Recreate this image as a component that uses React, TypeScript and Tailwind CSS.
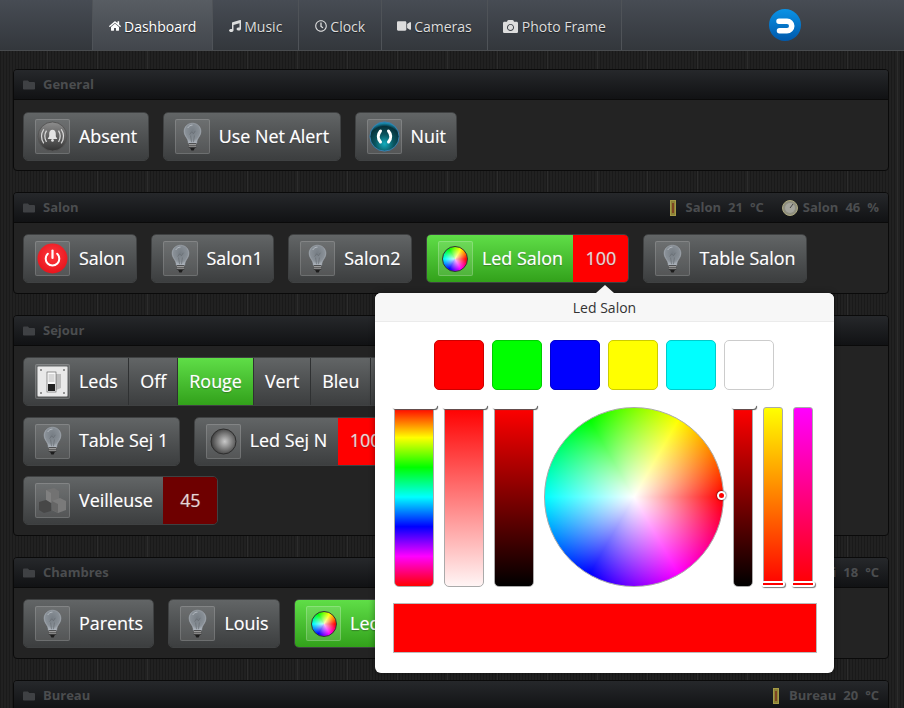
import React from "react";
import { FaHome, FaMusic, FaRegClock, FaVideo, FaCamera, FaFolder } from "react-icons/fa";

const Bulb = () => (
  <svg width="19" height="30" viewBox="0 0 20 31">
    <defs>
      <radialGradient id="glass" cx="0.5" cy="0.4" r="0.6">
        <stop offset="0" stopColor="#767d84" />
        <stop offset="0.7" stopColor="#899097" />
        <stop offset="1" stopColor="#b0b7bf" />
      </radialGradient>
    </defs>
    <path d="M10 1C4.8 1 1.2 4.8 1.2 9.6c0 3.8 2.4 6 3.6 8.6.6 1.3.7 2.6.8 3.8h8.8c.1-1.2.2-2.5.8-3.8 1.2-2.6 3.6-4.8 3.6-8.6C18.8 4.8 15.2 1 10 1z" fill="url(#glass)" stroke="#a9b0b8" strokeWidth="0.6" />
    <path d="M5 6c1-2 3-3 5-3" stroke="#c9ced4" strokeWidth="1" fill="none" opacity="0.7" />
    <path d="M7 13l2-3 2 2 2-3M8 14l1 7M12 14l-1 7" stroke="#5f656b" strokeWidth="0.6" fill="none" />
    <rect x="5.8" y="22" width="8.4" height="5" rx="1" fill="#3c3c3c" />
    <path d="M6 23.5h8M6 25.2h8" stroke="#c8c8c8" strokeWidth="0.8" />
    <path d="M7.5 27h5l-1.3 2.6h-2.4z" fill="#1d1d1d" />
  </svg>
);

const Bell = () => (
  <svg width="31" height="31" viewBox="0 0 32 32">
    <defs>
      <linearGradient id="bellbg" x1="0" y1="0" x2="0" y2="1">
        <stop offset="0" stopColor="#8e8e8e" />
        <stop offset="1" stopColor="#333333" />
      </linearGradient>
    </defs>
    <circle cx="16" cy="16" r="15" fill="url(#bellbg)" stroke="#555" />
    <path d="M16 9c-2.4 0-3.4 2-3.4 4.2v2.6L11 18.6h10l-1.600-2.800v-2.600C19.400 11 18.400 9 16 9z" fill="#e4e4e4" />
    <circle cx="16" cy="20" r="1.400" fill="#e4e4e4" />
    <path d="M9.800 10c-2.200 3.600-2.200 8 0 11.600M7 8.500c-3 4.600-3 10 0 14.600M22.200 10c2.200 3.600 2.200 8 0 11.600M25 8.500c3 4.600 3 10 0 14.600" stroke="#d8d8d8" strokeWidth="1.300" fill="none" />
  </svg>
);

const Power = () => (
  <svg width="31" height="31" viewBox="0 0 31 31">
    <defs>
      <radialGradient id="redb" cx="0.5" cy="0.4" r="0.6">
        <stop offset="0" stopColor="#ff3a3f" />
        <stop offset="1" stopColor="#e8141c" />
      </radialGradient>
    </defs>
    <circle cx="15.5" cy="15.5" r="15" fill="url(#redb)" />
    <path d="M10.8 10.8a6.8 6.8 0 1 0 9.4 0" stroke="#fff" strokeWidth="2" fill="none" strokeLinecap="round" />
    <path d="M15.5 7.5v7.5" stroke="#fff" strokeWidth="2.2" strokeLinecap="round" />
  </svg>
);

const Night = () => (
  <svg width="31" height="31" viewBox="0 0 31 31">
    <defs>
      <radialGradient id="teal" cx="0.5" cy="0.75" r="0.7">
        <stop offset="0" stopColor="#14aebf" />
        <stop offset="0.45" stopColor="#0a5560" />
        <stop offset="0.85" stopColor="#07313a" />
        <stop offset="1" stopColor="#1787a8" />
      </radialGradient>
    </defs>
    <circle cx="15.5" cy="15.5" r="14.6" fill="url(#teal)" stroke="#3a7fb0" />
    <path d="M11.500 10c-2.800 3.400-2.800 7.600 0 11M19.500 10c2.800 3.400 2.800 7.600 0 11" stroke="#fff" strokeWidth="3" fill="none" strokeLinecap="round" />
  </svg>
);

const Orb = () => (
  <svg width="27" height="27" viewBox="0 0 27 27">
    <defs>
      <radialGradient id="orb" cx="0.55" cy="0.5" r="0.55">
        <stop offset="0" stopColor="#c9c9c9" />
        <stop offset="0.65" stopColor="#6f6f6f" />
        <stop offset="1" stopColor="#3e3e3e" />
      </radialGradient>
    </defs>
    <circle cx="13.5" cy="13.5" r="12.5" fill="url(#orb)" stroke="#2e2e2e" />
  </svg>
);

const Cubes = () => (
  <svg width="31" height="27" viewBox="0 0 31 27">
    <path d="M9 3l8-2 5 3v9l-8 3-5-3z" fill="#727272" />
    <path d="M9 3l5 3v10l-5-3z" fill="#808080" />
    <path d="M2 15l7-2 5 3v8l-7 2-5-3z" fill="#474747" />
    <path d="M15 14l8-3 6 3v9l-8 3-6-3z" fill="#7a7a7a" />
    <path d="M15 14l6 3v9l-6-3z" fill="#666666" />
  </svg>
);

const Toggle = () => (
  <svg width="31" height="31" viewBox="0 0 31 31">
    <rect x="0.5" y="0.5" width="30" height="30" rx="1" fill="#e9e9e9" />
    <path d="M17 8h7v14l-7 3z" fill="#bdbdbd" />
    <rect x="10" y="6" width="9" height="20" fill="#fafafa" stroke="#555" strokeWidth="0.6" />
    <rect x="11.5" y="8" width="6" height="8" fill="#d8d8d8" />
    <rect x="11" y="18" width="7" height="7" fill="#222" />
    <circle cx="4" cy="4" r="1" fill="#777" />
    <circle cx="27" cy="4" r="1" fill="#777" />
    <circle cx="4" cy="27" r="1" fill="#777" />
    <circle cx="27" cy="27" r="1" fill="#777" />
  </svg>
);

const Thermo = () => (
  <svg width="6" height="16" viewBox="0 0 6 16" className="mr-[10px]">
    <rect x="0.5" y="0.5" width="5" height="15" fill="#8d8236" stroke="#a59a46" />
    <rect x="2.3" y="3" width="1.4" height="10" fill="#7a2a1c" />
  </svg>
);

const Gauge = () => (
  <svg width="16" height="16" viewBox="0 0 16 16" className="mr-[5px]">
    <circle cx="8" cy="8" r="7.5" fill="#8f8f80" stroke="#b0ab80" />
    <circle cx="8" cy="8" r="5" fill="#a5a59d" />
    <path d="M8 8l3-4" stroke="#444" strokeWidth="1" />
  </svg>
);

const MiniWheel = () => (
  <div className="relative h-[26px] w-[26px] overflow-hidden rounded-full border border-[#333] bg-[conic-gradient(from_90deg,#f00,#f0f,#00f,#0ff,#0f0,#ff0,#f00)]">
    <div className="absolute inset-0 bg-[radial-gradient(circle,#ffffffcc_0%,#ffffff00_65%)]" />
  </div>
);

const icons: Record<string, React.ReactNode> = {
  bulb: <Bulb />,
  bell: <Bell />,
  power: <Power />,
  night: <Night />,
  orb: <Orb />,
  cubes: <Cubes />,
  toggle: <Toggle />,
  wheel: <MiniWheel />,
};

const gray = "bg-gradient-to-b from-[#626566] to-[#3c3e3f]";
const green = "bg-gradient-to-b from-[#5fde47] to-[#32a11a]";
const bold = "[text-shadow:0_0_1px_#ffffff80,0_1px_1px_#0005]";

function IconBox({ icon, on }: { icon: string; on?: boolean }) {
  return (
    <span className={"flex h-[35px] w-[35px] shrink-0 items-center justify-center overflow-hidden rounded-[2px] border " + (on ? "border-[#ffffff33] bg-[#ffffff1f]" : "border-[#ffffff26] bg-[#ffffff1a]")}>
      {icons[icon]}
    </span>
  );
}

function Btn({ icon, label, on, value, valueClass }: { icon: string; label: string; on?: boolean; value?: string; valueClass?: string }) {
  return (
    <div className={"flex h-[49px] overflow-hidden rounded-[5px] border border-[#3f4142] text-[17.9px] leading-none text-white " + bold}>
      <div className={"flex items-center gap-[9px] pl-[11px] pr-[10.5px] " + (on ? green : gray)}>
        <IconBox icon={icon} on={on} />
        <span>{label}</span>
      </div>
      {value !== undefined && (
        <div className={"flex items-center justify-center text-[#e5d5d5] " + valueClass}>{value}</div>
      )}
    </div>
  );
}

function Panel({ title, right, children, bodyClass }: { title: string; right?: React.ReactNode; children?: React.ReactNode; bodyClass?: string }) {
  return (
    <section className="overflow-hidden rounded-[4px] border border-[#0a0a0a] bg-[#232323]">
      <header className="flex h-[30px] items-center justify-between border-b border-[#0a0a0a] bg-gradient-to-b from-[#26282b] to-[#111214] pl-[9px] pr-[9px] text-[13px] font-bold text-[#4b4d4f]">
        <div className="flex items-center gap-2">
          <FaFolder className="text-[12px] text-[#3f4144]" />
          <span>{title}</span>
        </div>
        {right && <div className="flex items-center">{right}</div>}
      </header>
      <div className={"flex flex-col gap-y-[10.5px] pl-[9px] pr-[9px] " + (bodyClass ?? "pb-[10px] pt-[11px]")}>{children}</div>
    </section>
  );
}

function Row({ children }: { children: React.ReactNode }) {
  return <div className="flex gap-x-[14px]">{children}</div>;
}

function Bar({ fill, handle }: { fill: string; handle: "top" | "bottom" }) {
  return (
    <div className="relative h-[180px] w-full">
      <div className={"h-full w-full rounded-b-[5px] rounded-t-[3px] border border-[#aaaaaa] " + fill} />
      {handle === "top" && (
        <div className="absolute -left-[2px] -right-[3px] -top-[2px] h-[4px] rounded-b-[3px] bg-white shadow-[1px_1px_1px_#555]" />
      )}
      {handle === "bottom" && (
        <div className="absolute -left-[2px] -right-[2px] bottom-0 flex h-[6px] items-center rounded-[4px] bg-white px-[2px] shadow-[1px_1px_1px_#777]">
          <div className="h-[2px] w-full bg-[#ff0000]" />
        </div>
      )}
    </div>
  );
}

const swatches = [
  "bg-[#ff0000] border-[#cc0000]",
  "bg-[#00ff00] border-[#00cc00]",
  "bg-[#0000ff] border-[#0000cc]",
  "bg-[#ffff00] border-[#cccc00]",
  "bg-[#00ffff] border-[#00cccc]",
  "bg-[#ffffff] border-[#cccccc]",
];

function Picker() {
  return (
    <div className="absolute left-[375px] top-[293px] z-10 w-[459px] rounded-[6px] bg-white text-[#333] shadow-[0_0_6px_#0006]">
      <div className="absolute -top-[8px] left-[221px] h-0 w-0 border-x-[9px] border-b-[8px] border-x-transparent border-b-[#f7f7f7]" />
      <div className="flex h-[29px] items-center justify-center rounded-t-[6px] border-b border-[#ebebeb] bg-[#f7f7f7] text-[14px]">Led Salon</div>
      <div className="mt-[18px] flex justify-center gap-2 pr-[1px]">
        {swatches.map((s) => (
          <div key={s} className={"h-[50px] w-[50px] rounded-[5px] border " + s} />
        ))}
      </div>
      <div className="ml-[19px] mt-[17px] flex">
        <div className="w-[40px]"><Bar handle="top" fill="bg-[linear-gradient(#f00,#ff0,#0f0,#0ff,#00f,#f0f,#f00)]" /></div>
        <div className="ml-[10px] w-[40px]"><Bar handle="top" fill="bg-[linear-gradient(#f00,#fff5f5)]" /></div>
        <div className="ml-[10px] w-[40px]"><Bar handle="top" fill="bg-[linear-gradient(#f00,#000)]" /></div>
        <div className="relative ml-[10px] h-[180px] w-[180px] rounded-full border border-[#aaaaaa] bg-[conic-gradient(from_90deg,#f00,#f0f,#00f,#0ff,#0f0,#ff0,#f00)]">
          <div className="h-full w-full rounded-full bg-[radial-gradient(circle,#ffffff_0%,#ffffff00_70%)]" />
          <div className="absolute right-[-3px] top-[83px] h-[9px] w-[9px] rounded-full border-[2.5px] border-white bg-[#f00] shadow-[0_0_2px_#000]" />
        </div>
        <div className="ml-[9px] w-[20px]"><Bar handle="top" fill="bg-[linear-gradient(#f00,#000)]" /></div>
        <div className="ml-[10px] w-[20px]"><Bar handle="bottom" fill="bg-[linear-gradient(#ff0,#f00)]" /></div>
        <div className="ml-[10px] w-[20px]"><Bar handle="bottom" fill="bg-[linear-gradient(#f0f,#f00)]" /></div>
      </div>
      <div className="mb-[20px] ml-[18px] mr-[17px] mt-[16px] h-[50px] border border-[#bbbbbb] bg-[#ff0000]" />
    </div>
  );
}

const navs = [
  { icon: <FaHome className="text-[12px]" />, label: "Dashboard", active: true, cls: "px-[15.5px] gap-[3.5px]" },
  { icon: <FaMusic className="text-[12px]" />, label: "Music", cls: "px-4 gap-[3.5px]" },
  { icon: <FaRegClock className="text-[12px]" />, label: "Clock", cls: "px-[15.5px] gap-[3.5px]" },
  { icon: <FaVideo className="text-[14px]" />, label: "Cameras", cls: "px-[15.5px] gap-[3px]" },
  { icon: <FaCamera className="text-[15px]" />, label: "Photo Frame", cls: "px-[15px] gap-[3.5px]" },
];

const SegClass = "flex items-center border-l border-[#2f3132] px-[11px] text-[17.9px] text-white";

export default function App() {
  return (
    <div className="relative h-[708px] w-[904px] overflow-hidden bg-[#1c1c1c] bg-[image:repeating-linear-gradient(90deg,transparent_0,transparent_47px,#2c2c2c_47px,#2c2c2c_48px,transparent_48px,transparent_50px),repeating-linear-gradient(90deg,#1a1a1a_0,#1a1a1a_1px,#212121_1px,#212121_3px)] [font-family:'Open_Sans',sans-serif]">
      <nav className="flex h-[51px] border-b border-[#484b4e] bg-gradient-to-b from-[#474c54] to-[#33373c] pl-[92px] text-[14px] text-[#dddddd] [text-shadow:0_1px_1px_#0008]">
        {navs.map((n) => (
          <div key={n.label} className={"flex items-center border-l border-[#4f5358] pt-[2px] " + n.cls + " " + (n.active ? "bg-gradient-to-b from-[#585d63] to-[#42464c] text-white" : "")}>
            {n.icon}
            <span>{n.label}</span>
          </div>
        ))}
        <div className="w-px bg-[#4f5358]" />
        <svg width="32" height="32" viewBox="0 0 32 32" className="ml-[147px] mt-[9px]">
          <defs>
            <linearGradient id="logo" x1="0" y1="0" x2="0" y2="1">
              <stop offset="0" stopColor="#0a93e6" />
              <stop offset="1" stopColor="#0058ab" />
            </linearGradient>
          </defs>
          <circle cx="16" cy="16" r="16" fill="url(#logo)" />
          <path d="M10 9.5h8a7.5 7.5 0 0 1 0 15h-7.5a2.7 2.7 0 0 1 0-5.5H18a1.8 1.8 0 0 0 0-4h-8a2.75 2.75 0 0 1 0-5.5z" fill="#fff" />
        </svg>
      </nav>

      <main className="flex flex-col gap-[21px] pl-[13px] pr-[15px] pt-[18px]">
        <Panel title="General" bodyClass="pb-[9px] pt-[12px]">
          <Row>
            <Btn icon="bell" label="Absent" />
            <Btn icon="bulb" label="Use Net Alert" />
            <Btn icon="night" label="Nuit" />
          </Row>
        </Panel>

        <Panel
          title="Salon"
          right={
            <>
              <Thermo />
              <span className="mr-[7px]">Salon</span>
              <span className="mr-[7px]">21</span>
              <span className="mr-[18px]">°C</span>
              <Gauge />
              <span className="mr-[7px]">Salon</span>
              <span className="mr-[7px]">46</span>
              <span>%</span>
            </>
          }
        >
          <Row>
            <Btn icon="power" label="Salon" />
            <Btn icon="bulb" label="Salon1" />
            <Btn icon="bulb" label="Salon2" />
            <Btn icon="wheel" label="Led Salon" on value="100" valueClass="w-[55px] bg-[#ff0000]" />
            <Btn icon="bulb" label="Table Salon" />
          </Row>
        </Panel>

        <Panel title="Sejour">
          <Row>
            <div className={"flex h-[49px] overflow-hidden rounded-[5px] border border-[#3f4142] " + bold}>
              <div className={"flex items-center gap-[9px] pl-[11px] pr-[10.5px] text-[17.9px] text-white " + gray}>
                <IconBox icon="toggle" />
                <span>Leds</span>
              </div>
              <div className={SegClass + " " + gray}>Off</div>
              <div className={SegClass + " " + green}>Rouge</div>
              <div className={SegClass + " " + gray}>Vert</div>
              <div className={SegClass + " " + gray}>Bleu</div>
              <div className={SegClass + " w-[40px] " + gray} />
            </div>
          </Row>
          <Row>
            <Btn icon="bulb" label="Table Sej 1" />
            <Btn icon="orb" label="Led Sej N" value="100" valueClass="w-[55px] bg-[#ff0000]" />
          </Row>
          <Row>
            <Btn icon="cubes" label="Veilleuse" value="45" valueClass="w-[54px] bg-[#6e0000] text-[#c9b4b4]" />
          </Row>
        </Panel>

        <Panel
          title="Chambres"
          right={
            <>
              <span className="mr-[7px]">i</span>
              <span className="mr-[7px]">18</span>
              <span>°C</span>
            </>
          }
        >
          <Row>
            <Btn icon="bulb" label="Parents" />
            <Btn icon="bulb" label="Louis" />
            <Btn icon="wheel" label="Led Salon" on />
          </Row>
        </Panel>

        <Panel
          title="Bureau"
          right={
            <>
              <Thermo />
              <span className="mr-[7px]">Bureau</span>
              <span className="mr-[7px]">20</span>
              <span>°C</span>
            </>
          }
        />
      </main>

      <Picker />
    </div>
  );
}
